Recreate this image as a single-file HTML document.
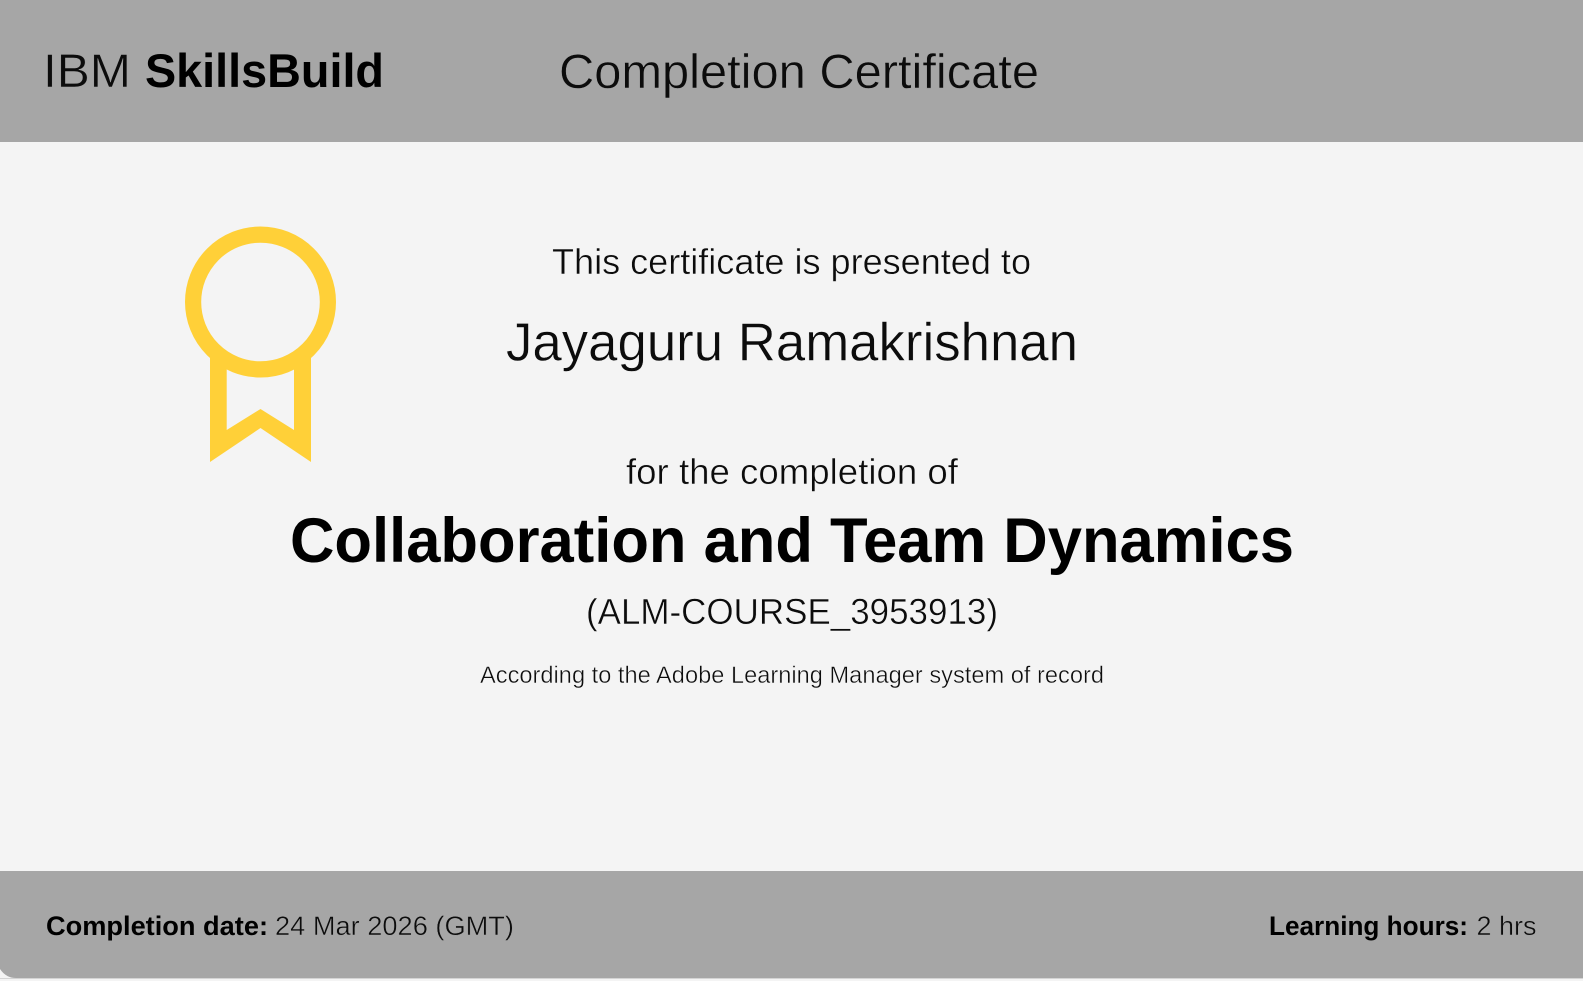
<!DOCTYPE html>
<html lang="en"><head><meta charset="utf-8"><title>Completion Certificate</title>
<style>
html,body{margin:0;padding:0;width:1583px;height:981px;overflow:hidden;background:#f4f4f4}
svg{display:block}
text{font-family:"Liberation Sans",Arial,sans-serif;fill:#0c0c0c;paint-order:fill}
.h{stroke:#a6a6a6;stroke-width:.45}
.m{stroke:#f4f4f4;stroke-width:.45}
.b{font-weight:700;fill:#000;stroke:none}
</style></head><body>
<svg width="1583" height="981" viewBox="0 0 1583 981" xmlns="http://www.w3.org/2000/svg">
<rect width="1583" height="981" fill="#f4f4f4"/>
<rect width="1583" height="142" fill="#a6a6a6"/>
<path d="M0 871H1583V978H16Q6 978 0 969Z" fill="#a6a6a6"/>
<rect x="0" y="978" width="1583" height="1" fill="#d4d4d4"/>
<text x="43" y="87" font-size="47.5" class="h" textLength="88" lengthAdjust="spacingAndGlyphs">IBM</text>
<text x="145" y="87" font-size="47.5" class="b" textLength="239" lengthAdjust="spacingAndGlyphs">SkillsBuild</text>
<text x="559" y="88" font-size="48" class="h" textLength="480" lengthAdjust="spacingAndGlyphs">Completion Certificate</text>
<circle cx="260.5" cy="302" r="67.4" fill="none" stroke="#ffd038" stroke-width="16.2"/>
<path fill="#ffd038" d="M210 355L226.7 360V430L260.5 409L294 430V360L311 355V462L260.5 428L210 462Z"/>
<text x="552" y="274" font-size="36" class="m" textLength="479" lengthAdjust="spacingAndGlyphs">This certificate is presented to</text>
<text x="506" y="360.5" font-size="54" class="m" textLength="572" lengthAdjust="spacingAndGlyphs">Jayaguru Ramakrishnan</text>
<text x="626" y="484" font-size="36" class="m" textLength="332" lengthAdjust="spacingAndGlyphs">for the completion of</text>
<text x="290" y="562" font-size="63" class="b" textLength="1004" lengthAdjust="spacingAndGlyphs">Collaboration and Team Dynamics</text>
<text x="586" y="624" font-size="36" class="m" textLength="412" lengthAdjust="spacingAndGlyphs">(ALM-COURSE_3953913)</text>
<text x="480" y="683" font-size="24" class="m" textLength="624" lengthAdjust="spacingAndGlyphs">According to the Adobe Learning Manager system of record</text>
<text x="46" y="935" font-size="27" class="b" textLength="222" lengthAdjust="spacingAndGlyphs">Completion date:</text>
<text x="275" y="935" font-size="27" class="h" textLength="239" lengthAdjust="spacingAndGlyphs">24 Mar 2026 (GMT)</text>
<text x="1269" y="935" font-size="27" class="b" textLength="199" lengthAdjust="spacingAndGlyphs">Learning hours:</text>
<text x="1476.5" y="935" font-size="27" class="h" textLength="60" lengthAdjust="spacingAndGlyphs">2 hrs</text>
</svg>
</body></html>
